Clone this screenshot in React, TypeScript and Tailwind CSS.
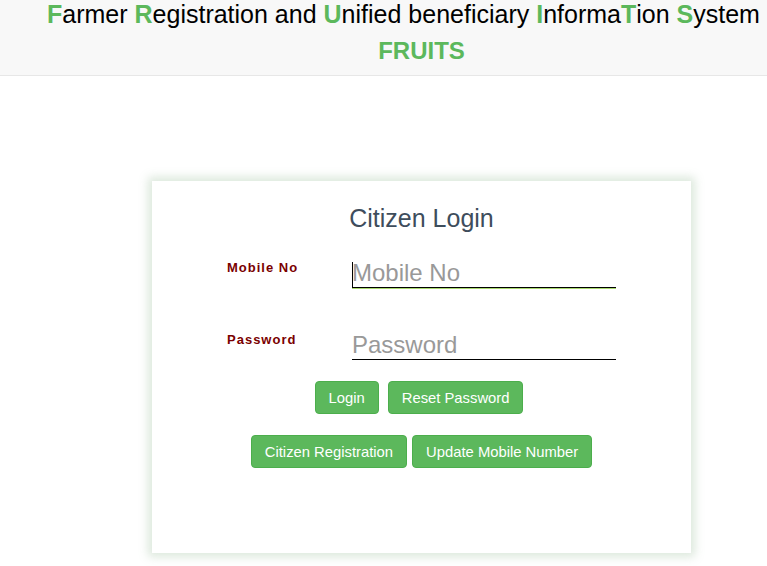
import React from "react";

const green = "text-[#5cb85c] font-bold";

function Title() {
  return (
    <div className="pl-[47px] whitespace-nowrap text-[25px] leading-[28px] text-black">
      <span className={green}>F</span>armer <span className={green}>R</span>egistration and{" "}
      <span className={green}>U</span>nified beneficiary <span className={green}>I</span>nforma
      <span className={green}>T</span>ion <span className={green}>S</span>ystem
    </div>
  );
}

function Field({ label, placeholder, focused }: { label: string; placeholder: string; focused?: boolean }) {
  return (
    <div className="flex items-start">
      <label className="w-[125px] pt-[5px] pl-[75px] box-content text-[13px] leading-[18px] font-bold tracking-[1px] text-[#7a0000]">
        {label}
      </label>
      <div className="relative">
        <input
          type={label === "Password" ? "password" : "text"}
          placeholder={placeholder}
          className={`block w-[264px] h-[34px] pt-[5px] bg-transparent text-[24px] leading-[28px] text-[#333] placeholder:text-[#999] border-b border-black outline-none ${
            focused ? "shadow-[0_1px_0_0_#a9d86e]" : ""
          }`}
        />
        {focused && <span className="absolute left-0 top-[8px] h-[25px] w-px bg-black" />}
      </div>
    </div>
  );
}

function Btn({ children }: { children: React.ReactNode }) {
  return (
    <button className="h-[33px] px-[13px] rounded-[4px] border border-[#4cae4c] bg-[#5cb85c] text-white text-[14.8px] leading-[20px]">
      {children}
    </button>
  );
}

export default function App() {
  return (
    <div className="min-h-[566px] bg-white font-['Liberation_Sans',Arial,sans-serif]">
      <header className="h-[76px] bg-[#f8f8f8] border-b border-[#e7e7e7]">
        <Title />
        <div className="pl-[76px] pt-[10px] text-center text-[24px] leading-[26px] font-bold text-[#5cb85c]">FRUITS</div>
      </header>

      <div className="ml-[152px] mt-[105px] w-[539px] h-[372px] bg-white shadow-[0_0_9px_4px_rgba(214,228,214,0.85)] pt-[24px]">
        <h2 className="text-center text-[25px] leading-[27px] text-[#3e4d5c]">Citizen Login</h2>
        <div className="mt-[22px] flex flex-col gap-[38px]">
          <Field label="Mobile No" placeholder="Mobile No" focused />
          <Field label="Password" placeholder="Password" />
        </div>
        <div className="mt-[21px] flex justify-center gap-[9px] pr-[5px]">
          <Btn>Login</Btn>
          <Btn>Reset Password</Btn>
        </div>
        <div className="mt-[21px] flex justify-center gap-[5px]">
          <Btn>Citizen Registration</Btn>
          <Btn>Update Mobile Number</Btn>
        </div>
      </div>
    </div>
  );
}
